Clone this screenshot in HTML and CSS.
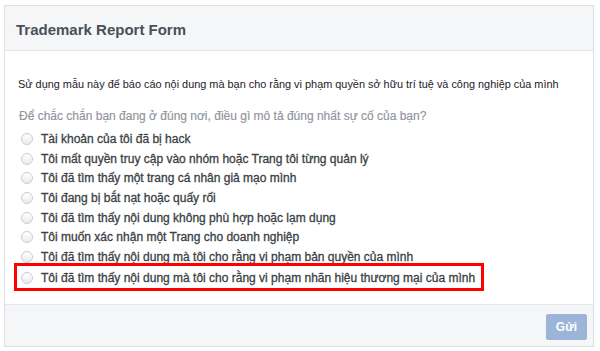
FILE: index.html
```html
<!DOCTYPE html>
<html>
<head>
<meta charset="utf-8">
<link rel="stylesheet" href="styles.css">
</head>
<body>
<div class="card">
  <div class="header">Trademark Report Form</div>
  <div class="body">
    <p class="desc">Sử dụng mẫu này để báo cáo nội dung mà bạn cho rằng vi phạm quyền sở hữu trí tuệ và công nghiệp của mình</p>
    <p class="question">Để chắc chắn bạn đang ở đúng nơi, điều gì mô tả đúng nhất sự cố của bạn?</p>
    <ul class="options">
      <li class="opt"><span class="radio"></span>Tài khoản của tôi đã bị hack</li>
      <li class="opt"><span class="radio"></span>Tôi mất quyền truy cập vào nhóm hoặc Trang tôi từng quản lý</li>
      <li class="opt"><span class="radio"></span>Tôi đã tìm thấy một trang cá nhân giả mạo mình</li>
      <li class="opt"><span class="radio"></span>Tôi đang bị bắt nạt hoặc quấy rối</li>
      <li class="opt"><span class="radio"></span>Tôi đã tìm thấy nội dung không phù hợp hoặc lạm dụng</li>
      <li class="opt"><span class="radio"></span>Tôi muốn xác nhận một Trang cho doanh nghiệp</li>
      <li class="opt"><span class="radio"></span>Tôi đã tìm thấy nội dung mà tôi cho rằng vi phạm bản quyền của mình</li>
      <li class="opt highlight"><span class="radio"></span>Tôi đã tìm thấy nội dung mà tôi cho rằng vi phạm nhãn hiệu thương mại của mình</li>
    </ul>
  </div>
  <div class="footer"><button class="send">Gửi</button></div>
</div>
</body>
</html>
```
FILE: styles.css
```css
html, body { margin: 0; padding: 0; background: #fff; }
body { font-family: "Liberation Sans", Arial, sans-serif; color: #4b4f56; }
.card {
  margin: 5px 0 0 4px;
  width: 590px;
  height: 342px;
  border: 1px solid #dddfe2;
  box-sizing: border-box;
  display: flex;
  flex-direction: column;
  background: #fff;
}
.header {
  height: 45px;
  box-sizing: border-box;
  background: #f5f6f7;
  border-bottom: 1px solid #e5e6e9;
  padding: 15px 0 0 11px;
  font-size: 15px;
  font-weight: bold;
  color: #4b4f56;
}
.body { flex: 1; padding: 0 0 0 13px; }
.desc { margin: 27px 0 0 0; font-size: 10.9px; color: #1d2129; }
.question { margin: 19px 0 0 1px; font-size: 12px; color: #90949c; -webkit-text-stroke: 0.15px #90949c; }
.options { list-style: none; margin: 6px 0 0 0; padding: 0; }
.opt {
  display: flex; align-items: center;
  height: 19.7px;
  font-size: 12px;
  color: #3b3f46;
  -webkit-text-stroke: 0.3px #3b3f46;
  padding-left: 3px;
  position: relative;
}
.radio {
  width: 12px; height: 12px;
  box-sizing: border-box;
  border: 1px solid #c9ccd1;
  border-radius: 50%;
  background: linear-gradient(#fff, #e9ebee);
  margin-right: 8px;
  flex: none;
}
.highlight { margin-top: 1px; }
.highlight::after {
  content: "";
  position: absolute;
  left: -4px; top: -5px;
  width: 470px; height: 28px;
  box-sizing: border-box;
  border: 3px solid #f00;
}
.footer {
  height: 42px;
  box-sizing: border-box;
  background: #f5f6f7;
  border-top: 1px solid #e5e6e9;
  display: flex; justify-content: flex-end; align-items: center;
  padding-right: 6px;
  padding-top: 2px;
}
.send {
  width: 41px; height: 26px;
  background: #9cb4d8; border: 1px solid #9cb4d8; border-radius: 2px;
  color: #fff; font-weight: bold; font-size: 12px;
  font-family: "Liberation Sans", Arial, sans-serif;
  padding: 0;
}
```
